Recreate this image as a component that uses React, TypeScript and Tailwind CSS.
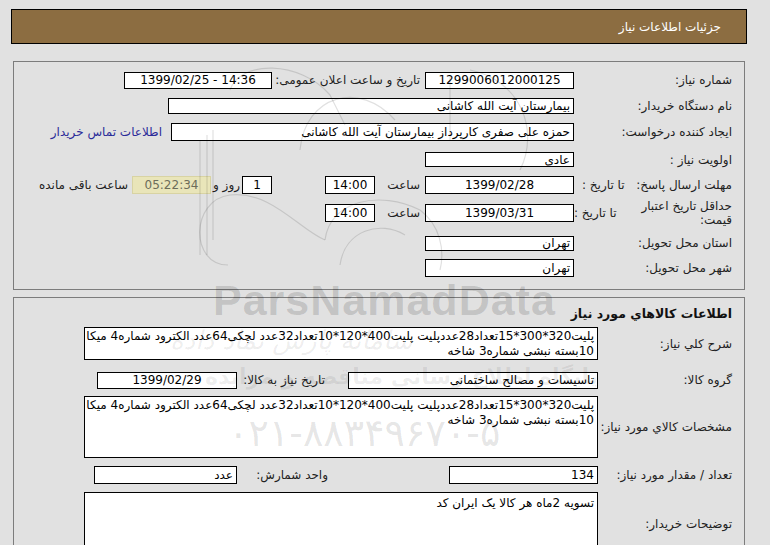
import { ReactNode } from "react";

type BoxProps = {
  children?: ReactNode;
  className?: string;
  ltr?: boolean;
};

// white framed value box, like the old asp.net readonly textbox
function Box({ children, className = "", ltr }: BoxProps) {
  return (
    <div
      dir={ltr ? "ltr" : "rtl"}
      className={`bg-white border border-black flex items-center px-[3px] leading-none whitespace-nowrap overflow-hidden text-[12px] text-black shrink-0 ${className}`}
    >
      {children}
    </div>
  );
}

function Label({ children, className = "" }: { children: ReactNode; className?: string }) {
  return <div className={`shrink-0 whitespace-nowrap text-[12px] text-[#222] ${className}`}>{children}</div>;
}

function Watermark() {
  return (
    <div className="absolute inset-0 pointer-events-none overflow-hidden">
      <svg className="absolute left-0 top-0" width="770" height="545" fill="none" stroke="rgba(0,0,0,0.12)" strokeWidth="1.2">
        <path d="M200 140 L200 255" />
        <path d="M207 135 L207 255" />
        <path d="M213 130 L213 240" />
        <path d="M228 265 C 190 265, 190 200, 230 195 C 270 190, 300 230, 325 240" />
        <path d="M230 90 C 240 60, 300 60, 330 95 L 345 125" />
        <path d="M300 150 C 305 95, 360 80, 395 120" />
        <path d="M325 240 C 330 200, 380 190, 420 210 C 440 225, 445 250, 440 270" />
        <path d="M340 265 C 345 230, 380 220, 405 235" />
        <path d="M450 75 L 450 140" />
        <path d="M470 70 C 520 80, 540 130, 520 170" />
      </svg>
      <div className="absolute left-[213px] top-[279px] font-['Liberation_Sans',sans-serif] font-bold text-[43px] leading-none text-black/[0.14] tracking-[1px]">
        ParsNamadData
      </div>
      <div dir="rtl" className="absolute left-[170px] top-[327px] font-['DejaVu_Sans',sans-serif] italic text-[26px] leading-none text-black/[0.07]">
        سامانه پارس نماد داده
      </div>
      <div dir="rtl" className="absolute left-[205px] top-[366px] font-['DejaVu_Sans',sans-serif] font-bold text-[22px] leading-none text-black/[0.07]">
        پایگاه اطلاع رسانی مناقصه و مزایده
      </div>
      <div dir="ltr" className="absolute left-[228px] top-[414px] font-['DejaVu_Sans',sans-serif] text-[38px] leading-none text-black/[0.11]">
        ۰۲۱-۸۸۳۴۹۶۷۰-۵
      </div>
    </div>
  );
}

export default function App() {
  return (
    <div
      dir="rtl"
      className="relative min-h-[545px] h-[545px] overflow-hidden bg-[#e1e1e1] pt-[9px] pl-[11px] pr-[23px] font-['DejaVu_Sans',sans-serif]"
    >
      <div className="h-[35px] bg-[#8c6d41] border border-black flex items-center pr-[25px] text-white text-[12px]">
        جزئیات اطلاعات نیاز
      </div>

      {/* panel 1 */}
      <div className="mx-[2px] mt-[17px] h-[229px] border border-[#7c7c7c] pr-[12px] pt-[5px]">
        <div className="flex items-center h-[26px]">
          <Label className="w-[158px]">شماره نیاز:</Label>
          <Box ltr className="w-[149px] h-[17px] justify-center">1299006012000125</Box>
          <Label className="w-[148px] mr-[5px]">تاریخ و ساعت اعلان عمومی:</Label>
          <Box ltr className="w-[148px] h-[17px] justify-center">1399/02/25 - 14:36</Box>
        </div>
        <div className="flex items-center h-[26px]">
          <Label className="w-[158px]">نام دستگاه خریدار:</Label>
          <Box className="w-[406px] h-[16px]">بیمارستان آیت الله کاشانی</Box>
        </div>
        <div className="flex items-center h-[26px]">
          <Label className="w-[158px]">ایجاد کننده درخواست:</Label>
          <Box className="w-[403px] h-[18px]">حمزه علی صفری کارپرداز بیمارستان آیت الله کاشانی</Box>
          <a className="mr-[9px] text-[12px] text-[#2b2b99] whitespace-nowrap">اطلاعات تماس خریدار</a>
        </div>
        <div className="flex items-center h-[29px]">
          <Label className="w-[158px]">اولویت نیاز :</Label>
          <Box className="w-[149px] h-[15px]">عادي</Box>
        </div>
        <div className="flex items-center h-[22px]">
          <div className="w-[158px] shrink-0 flex justify-between pl-[8px] whitespace-nowrap text-[12px] text-[#222]">
            <span>مهلت ارسال پاسخ:</span>
            <span>تا تاریخ :</span>
          </div>
          <Box ltr className="w-[149px] h-[18px] justify-center">1399/02/28</Box>
          <Label className="w-[50px] pr-[5px]">ساعت</Label>
          <Box ltr className="w-[50px] h-[18px] justify-center">14:00</Box>
          <div className="w-[53px] shrink-0" />
          <Box ltr className="w-[30px] h-[18px] justify-center">1</Box>
          <Label className="w-[31px] text-center">روز و</Label>
          <Box ltr className="w-[79px] h-[18px] justify-center !bg-[#e9e5b9] !border-[#d8d3a3] !text-[#6d6d5a]">
            05:22:34
          </Box>
          <Label className="mr-[4px]">ساعت باقی مانده</Label>
        </div>
        <div className="flex items-center h-[34px]">
          <div className="w-[158px] shrink-0 flex items-center justify-between text-[12px] text-[#222]">
            <span className="w-[96px] leading-[14px]">حداقل تاریخ اعتبار قیمت:</span>
            <span className="whitespace-nowrap">تا تاریخ :</span>
          </div>
          <Box ltr className="w-[149px] h-[18px] justify-center">1399/03/31</Box>
          <Label className="w-[50px] pr-[5px]">ساعت</Label>
          <Box ltr className="w-[50px] h-[18px] justify-center">14:00</Box>
        </div>
        <div className="flex items-center h-[26px]">
          <Label className="w-[158px]">استان محل تحویل:</Label>
          <Box className="w-[149px] h-[15px]">تهران</Box>
        </div>
        <div className="flex items-center h-[24px]">
          <Label className="w-[158px]">شهر محل تحویل:</Label>
          <Box className="w-[149px] h-[18px]">تهران</Box>
        </div>
      </div>

      {/* panel 2 */}
      <div className="mx-[2px] mt-[7px] h-[300px] border border-[#7c7c7c] pr-[12px] pt-[4px]">
        <div className="h-[24px] flex items-center text-[12.5px] font-bold text-[#111]">
          اطلاعات کالاهاي مورد نياز
        </div>
        <div className="flex items-center mt-[1px]">
          <Label className="w-[134px]">شرح کلي نياز:</Label>
          <Box className="w-[514px] h-[33px] !items-start !leading-[15px] pt-[1px]">
            <div>
              پلیت320*300*15تعداد28عددپلیت پلیت400*120*10تعداد32عدد لچکی64عدد الکترود شماره4 میکا
              <br />
              10بسته نبشی شماره3 شاخه
            </div>
          </Box>
        </div>
        <div className="flex items-center mt-[11px]">
          <Label className="w-[134px]">گروه کالا:</Label>
          <Box className="w-[250px] h-[17px]">تاسیسات و مصالح ساختمانی</Box>
          <Label className="w-[111px] pr-[23px]">تاریخ نیاز به کالا:</Label>
          <Box ltr className="w-[140px] h-[17px] justify-center">1399/02/29</Box>
        </div>
        <div className="flex items-center mt-[7px]">
          <Label className="w-[134px]">مشخصات کالاي مورد نياز:</Label>
          <Box className="w-[514px] h-[62px] !items-start !leading-[15px] pt-[1px]">
            <div>
              پلیت320*300*15تعداد28عددپلیت پلیت400*120*10تعداد32عدد لچکی64عدد الکترود شماره4 میکا
              <br />
              10بسته نبشی شماره3 شاخه
            </div>
          </Box>
        </div>
        <div className="flex items-center mt-[8px]">
          <Label className="w-[134px]">تعداد / مقدار مورد نياز:</Label>
          <Box className="w-[149px] h-[18px]">134</Box>
          <Label className="w-[212px] pr-[121px]">واحد شمارش:</Label>
          <Box className="w-[143px] h-[18px]">عدد</Box>
        </div>
        <div className="flex items-center mt-[8px]">
          <Label className="w-[134px]">توضیحات خریدار:</Label>
          <Box className="w-[514px] h-[64px] !items-start pt-[4px]">تسویه 2ماه هر کالا یک ایران کد</Box>
        </div>
      </div>

      <Watermark />
    </div>
  );
}
